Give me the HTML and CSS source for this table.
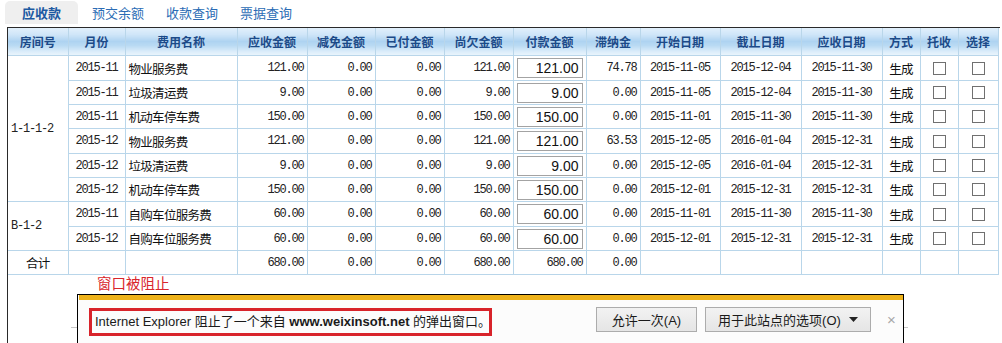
FILE: index.html
```html
<!DOCTYPE html>
<html lang="zh-CN">
<head>
<meta charset="utf-8">
<title>应收款</title>
<link rel="stylesheet" href="styles.css">
</head>
<body>
<div class="tabs">
  <span class="tab active">应收款</span>
  <span class="tab">预交余额</span>
  <span class="tab">收款查询</span>
  <span class="tab">票据查询</span>
</div>
<div class="panel">
  <table class="grid">
    <colgroup>
      <col class="w-room"><col class="w-month"><col class="w-name"><col class="w-amt"><col class="w-amt2"><col class="w-amt3"><col class="w-amt3"><col class="w-pay"><col class="w-late"><col class="w-date1"><col class="w-date"><col class="w-date"><col class="w-chk"><col class="w-chk"><col class="w-sel">
    </colgroup>
    <thead>
      <tr>
        <th class="first">房间号</th><th>月份</th><th>费用名称</th><th>应收金额</th><th>减免金额</th><th>已付金额</th><th>尚欠金额</th><th>付款金额</th><th>滞纳金</th><th>开始日期</th><th>截止日期</th><th>应收日期</th><th>方式</th><th>托收</th><th>选择</th>
      </tr>
    </thead>
    <tbody>
      <tr class="tall">
        <td class="first room num" rowspan="6">1-1-1-2</td>
        <td class="num c">2015-11</td><td class="name">物业服务费</td><td class="num r">121.00</td><td class="num r">0.00</td><td class="num r">0.00</td><td class="num r">121.00</td>
        <td class="paycell"><input class="pay" type="text" value="121.00"></td>
        <td class="num r">74.78</td><td class="num c">2015-11-05</td><td class="num c">2015-12-04</td><td class="num c">2015-11-30</td><td class="name c">生成</td>
        <td class="c"><input class="box" type="checkbox"></td><td class="c"><input class="box" type="checkbox"></td>
      </tr>
      <tr>
        <td class="num c">2015-11</td><td class="name">垃圾清运费</td><td class="num r">9.00</td><td class="num r">0.00</td><td class="num r">0.00</td><td class="num r">9.00</td>
        <td class="paycell"><input class="pay" type="text" value="9.00"></td>
        <td class="num r">0.00</td><td class="num c">2015-11-05</td><td class="num c">2015-12-04</td><td class="num c">2015-11-30</td><td class="name c">生成</td>
        <td class="c"><input class="box" type="checkbox"></td><td class="c"><input class="box" type="checkbox"></td>
      </tr>
      <tr>
        <td class="num c">2015-11</td><td class="name">机动车停车费</td><td class="num r">150.00</td><td class="num r">0.00</td><td class="num r">0.00</td><td class="num r">150.00</td>
        <td class="paycell"><input class="pay" type="text" value="150.00"></td>
        <td class="num r">0.00</td><td class="num c">2015-11-01</td><td class="num c">2015-11-30</td><td class="num c">2015-11-30</td><td class="name c">生成</td>
        <td class="c"><input class="box" type="checkbox"></td><td class="c"><input class="box" type="checkbox"></td>
      </tr>
      <tr class="tall">
        <td class="num c">2015-12</td><td class="name">物业服务费</td><td class="num r">121.00</td><td class="num r">0.00</td><td class="num r">0.00</td><td class="num r">121.00</td>
        <td class="paycell"><input class="pay" type="text" value="121.00"></td>
        <td class="num r">63.53</td><td class="num c">2015-12-05</td><td class="num c">2016-01-04</td><td class="num c">2015-12-31</td><td class="name c">生成</td>
        <td class="c"><input class="box" type="checkbox"></td><td class="c"><input class="box" type="checkbox"></td>
      </tr>
      <tr>
        <td class="num c">2015-12</td><td class="name">垃圾清运费</td><td class="num r">9.00</td><td class="num r">0.00</td><td class="num r">0.00</td><td class="num r">9.00</td>
        <td class="paycell"><input class="pay" type="text" value="9.00"></td>
        <td class="num r">0.00</td><td class="num c">2015-12-05</td><td class="num c">2016-01-04</td><td class="num c">2015-12-31</td><td class="name c">生成</td>
        <td class="c"><input class="box" type="checkbox"></td><td class="c"><input class="box" type="checkbox"></td>
      </tr>
      <tr>
        <td class="num c">2015-12</td><td class="name">机动车停车费</td><td class="num r">150.00</td><td class="num r">0.00</td><td class="num r">0.00</td><td class="num r">150.00</td>
        <td class="paycell"><input class="pay" type="text" value="150.00"></td>
        <td class="num r">0.00</td><td class="num c">2015-12-01</td><td class="num c">2015-12-31</td><td class="num c">2015-12-31</td><td class="name c">生成</td>
        <td class="c"><input class="box" type="checkbox"></td><td class="c"><input class="box" type="checkbox"></td>
      </tr>
      <tr class="tall">
        <td class="first room num" rowspan="2">B-1-2</td>
        <td class="num c">2015-11</td><td class="name">自购车位服务费</td><td class="num r">60.00</td><td class="num r">0.00</td><td class="num r">0.00</td><td class="num r">60.00</td>
        <td class="paycell"><input class="pay" type="text" value="60.00"></td>
        <td class="num r">0.00</td><td class="num c">2015-11-01</td><td class="num c">2015-11-30</td><td class="num c">2015-11-30</td><td class="name c">生成</td>
        <td class="c"><input class="box" type="checkbox"></td><td class="c"><input class="box" type="checkbox"></td>
      </tr>
      <tr>
        <td class="num c">2015-12</td><td class="name">自购车位服务费</td><td class="num r">60.00</td><td class="num r">0.00</td><td class="num r">0.00</td><td class="num r">60.00</td>
        <td class="paycell"><input class="pay" type="text" value="60.00"></td>
        <td class="num r">0.00</td><td class="num c">2015-12-01</td><td class="num c">2015-12-31</td><td class="num c">2015-12-31</td><td class="name c">生成</td>
        <td class="c"><input class="box" type="checkbox"></td><td class="c"><input class="box" type="checkbox"></td>
      </tr>
      <tr>
        <td class="first name c">合计</td><td></td><td></td><td class="num r">680.00</td><td class="num r">0.00</td><td class="num r">0.00</td><td class="num r">680.00</td><td class="num r">680.00</td><td class="num r">0.00</td><td></td><td></td><td></td><td></td><td></td><td></td>
      </tr>
    </tbody>
  </table>
  <div class="below">
    <p class="blocked">窗口被阻止</p>
    <div class="rule"></div>
  </div>
  <div class="ie-bar">
    <div class="ie-stripe"></div>
    <div class="ie-body">
      <div class="ie-msg">Internet Explorer 阻止了一个来自 <b>www.weixinsoft.net</b> 的弹出窗口。</div>
      <button class="ie-btn once" type="button">允许一次(A)</button>
      <button class="ie-btn opts" type="button">用于此站点的选项(O)<svg class="caret" width="9" height="5" viewBox="0 0 9 5"><path d="M0 0H9L4.5 5Z" fill="#222"/></svg></button>
      <span class="ie-close">×</span>
    </div>
  </div>
</div>
</body>
</html>
```
FILE: styles.css
```css
html, body {
  margin: 0;
  padding: 0;
  background: #fff;
  overflow: hidden;
}
body {
  width: 1002px;
  height: 343px;
  font-family: "Noto Sans CJK SC", sans-serif;
  color: #1e1e1e;
}

/* tabs */
.tabs {
  display: flex;
  align-items: flex-start;
  height: 27px;
  padding: 1px 0 0 5px;
  box-sizing: border-box;
  gap: 22px;
}
.tab {
  font-size: 13px;
  line-height: 23px;
  color: #2b6cb5;
}
.tab.active {
  width: 73px;
  height: 23px;
  margin-right: -8px;
  text-align: center;
  font-weight: bold;
  color: #1d5aa2;
  background: #efefef;
  border-radius: 5px 5px 0 0;
}

/* panel */
.panel {
  position: relative;
  margin-left: 7px;
  width: 993px;
  height: 316px;
  border-top: 1px solid #2a2a2a;
  border-left: 1px solid #2a2a2a;
  box-sizing: border-box;
}

.grid {
  table-layout: fixed;
  border-collapse: collapse;
  width: 990px;
}
.w-room { width: 60px; }
.w-month { width: 57px; }
.w-name { width: 112px; }
.w-amt { width: 70px; }
.w-amt2 { width: 68px; }
.w-amt3 { width: 69px; }
.w-pay { width: 73px; }
.w-late { width: 54px; }
.w-date1 { width: 80px; }
.w-date { width: 81px; }
.w-chk { width: 38px; }
.w-sel { width: 40px; }

.grid th, .grid td {
  border: 1px solid #b9d6ea;
  padding: 0 3px;
  white-space: nowrap;
  overflow: hidden;
}
.grid th.first, .grid td.first { border-left: none; }
.grid thead th {
  border-top: none;
  height: 27px;
  font-size: 12px;
  font-weight: bold;
  color: #1c4a88;
  text-align: center;
  background: linear-gradient(to bottom, #e1effb 0%, #cfe5f8 25%, #aed3f1 50%, #b9daf3 65%, #dcedfa 88%, #e9f4fc 100%);
}
.grid tbody tr { height: 24px; }
.grid tbody tr.tall { height: 25px; }

.num {
  font-family: "Liberation Mono", monospace;
  font-size: 12px;
  letter-spacing: -1.2px;
  color: #222;
}
.name {
  font-size: 12.5px;
  letter-spacing: -0.7px;
  color: #111;
}
.c { text-align: center; }
.r { text-align: right; }
.room { text-align: left; padding-left: 1px; }

.paycell { padding: 0 3px; }
.pay {
  display: block;
  width: 66px;
  height: 20px;
  margin: 0;
  padding: 0 3px;
  box-sizing: border-box;
  border: 1px solid #a3a3a3;
  font-family: "Liberation Sans", Arial, sans-serif;
  font-size: 14px;
  text-align: right;
  color: #111;
  background: #fff;
}
.box {
  -webkit-appearance: none;
  appearance: none;
  display: block;
  width: 13px;
  height: 13px;
  margin: 0 auto;
  border: 1px solid #707070;
  background: #fff;
  border-radius: 0;
}

/* below the grid */
.below {
  padding-left: 89px;
}
.blocked {
  margin: 0;
  font-size: 14.5px;
  line-height: 16px;
  color: #d9262c;
}
.rule {
  margin: 36px 0 0 -26px;
  width: 837px;
  border-top: 1px solid #c6c6c6;
}

/* IE notification bar */
.ie-bar {
  position: absolute;
  left: 69px;
  top: 266px;
  width: 827px;
  height: 60px;
  box-sizing: border-box;
  border: 1px solid #000;
  border-bottom: none;
  background: #fcfcfc;
}
.ie-stripe {
  height: 5px;
  margin: 0 0 0 1px;
  background: #eeb21a;
}
.ie-body {
  display: flex;
  align-items: flex-start;
  padding: 8px 0 0 11px;
  font-family: "Liberation Sans", "Noto Sans CJK SC", sans-serif;
  font-size: 13px;
  color: #1a1a1a;
}
.ie-msg {
  width: 403px;
  height: 28px;
  box-sizing: border-box;
  border: 3px solid #d8232a;
  padding-left: 3px;
  line-height: 22px;
  white-space: nowrap;
}
.ie-msg b { font-weight: bold; }
.ie-btn {
  height: 25px;
  margin-top: -1px;
  box-sizing: border-box;
  border: 1px solid #acacac;
  background: linear-gradient(to bottom, #f2f2f2, #e5e5e5);
  font-family: "Liberation Sans", "Noto Sans CJK SC", sans-serif;
  font-size: 13px;
  color: #1a1a1a;
  padding: 0;
}
.once {
  width: 101px;
  margin-left: 104px;
}
.opts {
  width: 166px;
  margin-left: 8px;
  display: flex;
  align-items: center;
  justify-content: center;
  gap: 8px;
}
.ie-close {
  margin-left: 16px;
  font-size: 15px;
  line-height: 24px;
  color: #a8a8a8;
}
```
